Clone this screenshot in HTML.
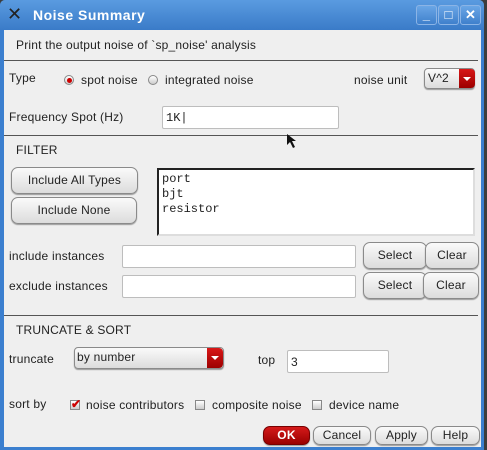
<!DOCTYPE html>
<html><head><style>
*{margin:0;padding:0;box-sizing:border-box}
body{width:487px;height:450px;overflow:hidden;background:#3d3d3d;font-family:"Liberation Sans",sans-serif;font-size:12px;letter-spacing:0.2px;color:#222;position:relative}
.a{position:absolute;white-space:nowrap}
#win{position:absolute;left:0;top:0;width:484px;height:450px;background:#3b7fcf;border-radius:5px 5px 0 0}
#title{position:absolute;left:0;top:0;width:484px;height:30px;background:linear-gradient(#5a9be0,#3a7bc8);border-radius:5px 5px 0 0}
#content{position:absolute;left:4px;top:30px;width:477px;height:417px;background:#efefef}
.sep{position:absolute;left:4px;width:474px;height:1px;background:#555}
.btn{position:absolute;background:linear-gradient(#fafafa,#dcdcdc);border:1px solid #8a8a8a;border-radius:7px;text-align:center;box-shadow:0 1px 1px #999;font-size:12px}
.inp{position:absolute;background:#fff;border:1px solid #bdbdbd;border-radius:2px}
.tb{position:absolute;top:5px;width:21px;height:20px;border:1px solid #8bb4e6;border-radius:3px;background:linear-gradient(#6aa6e6,#3f80cc);color:#fff;text-align:center;font-weight:bold;font-size:13px;line-height:18px}
.radio{position:absolute;width:10px;height:10px;border-radius:50%;border:1px solid #888;background:linear-gradient(#fff,#ccc)}
.cb{position:absolute;width:10px;height:10px;border:1px solid #888;background:linear-gradient(#fff,#ccc)}
.dd{position:absolute;width:16px;background:linear-gradient(#d81818,#9c0000);border-radius:0 4px 4px 0}
.dd:after{content:"";position:absolute;left:4px;top:8px;border-left:4px solid transparent;border-right:4px solid transparent;border-top:4px solid #fff}
</style></head><body>
<div id="win"></div>
<div id="title">
<div class="a" style="left:7px;top:4px;font-size:18px;color:#222">✕</div>
<div class="a" style="left:33px;top:7px;font-size:14px;font-weight:bold;color:#fff;letter-spacing:0.5px">Noise Summary</div>
<div class="tb" style="left:416px">_</div>
<div class="tb" style="left:438px">□</div>
<div class="tb" style="left:460px">✕</div>
</div>
<div id="content"></div>
<div class="a" style="left:16px;top:38px">Print the output noise of `sp_noise' analysis</div>
<div class="sep" style="top:60px"></div>
<div class="a" style="left:9px;top:71px">Type</div>
<div class="radio" style="left:64px;top:75px"><div style="position:absolute;left:2px;top:2px;width:5px;height:5px;border-radius:50%;background:#c00"></div></div>
<div class="a" style="left:81px;top:73px">spot noise</div>
<div class="radio" style="left:148px;top:75px"></div>
<div class="a" style="left:165px;top:73px">integrated noise</div>
<div class="a" style="left:354px;top:73px">noise unit</div>
<div class="btn" style="left:424px;top:68px;width:51px;height:21px;text-align:left;padding-left:3px;line-height:18px;border-radius:4px">V^2</div>
<div class="dd" style="left:459px;top:69px;height:19px"></div>
<div class="a" style="left:9px;top:110px">Frequency Spot (Hz)</div>
<div class="inp" style="left:162px;top:106px;width:177px;height:23px"><span class="a" style="left:3px;top:4px;font-family:'Liberation Mono',monospace;font-size:12px;letter-spacing:0">1K|</span></div>
<div class="sep" style="top:135px"></div>
<div class="a" style="left:16px;top:143px">FILTER</div>
<div class="btn" style="left:11px;top:167px;width:127px;height:27px;line-height:25px">Include All Types</div>
<div class="btn" style="left:11px;top:197px;width:126px;height:27px;line-height:25px">Include None</div>
<div style="position:absolute;left:157px;top:168px;width:318px;height:68px;background:#fff;border:2px solid #222;border-right-color:#ddd;border-bottom-color:#ddd;font-family:'Liberation Mono',monospace;font-size:12px;letter-spacing:0;line-height:15px;padding:2px 3px">port<br>bjt<br>resistor</div>
<div class="a" style="left:9px;top:249px">include instances</div>
<div class="inp" style="left:122px;top:245px;width:234px;height:23px"></div>
<div class="btn" style="left:363px;top:242px;width:64px;height:27px;line-height:25px">Select</div>
<div class="btn" style="left:425px;top:242px;width:54px;height:27px;line-height:25px">Clear</div>
<div class="a" style="left:9px;top:279px">exclude instances</div>
<div class="inp" style="left:122px;top:275px;width:234px;height:23px"></div>
<div class="btn" style="left:363px;top:272px;width:64px;height:27px;line-height:25px">Select</div>
<div class="btn" style="left:423px;top:272px;width:56px;height:27px;line-height:25px">Clear</div>
<div class="sep" style="top:315px"></div>
<div class="a" style="left:16px;top:323px">TRUNCATE &amp; SORT</div>
<div class="a" style="left:9px;top:352px">truncate</div>
<div class="btn" style="left:74px;top:347px;width:150px;height:22px;text-align:left;padding-left:2px;line-height:19px;border-radius:4px">by number</div>
<div class="dd" style="left:207px;top:348px;height:20px"></div>
<div class="a" style="left:258px;top:353px">top</div>
<div class="inp" style="left:287px;top:350px;width:102px;height:23px"><span class="a" style="left:3px;top:4px">3</span></div>
<div class="a" style="left:9px;top:397px">sort by</div>
<div class="cb" style="left:70px;top:400px"><span class="a" style="left:0px;top:-4px;color:#c00;font-size:12px;font-weight:bold">✔</span></div>
<div class="a" style="left:86px;top:398px">noise contributors</div>
<div class="cb" style="left:195px;top:400px"></div>
<div class="a" style="left:212px;top:398px">composite noise</div>
<div class="cb" style="left:312px;top:400px"></div>
<div class="a" style="left:329px;top:398px">device name</div>
<div class="btn" style="left:263px;top:426px;width:47px;height:19px;line-height:17px;background:linear-gradient(#d51a1a,#9a0000);color:#fff;font-weight:bold;border-color:#700">OK</div>
<div class="btn" style="left:313px;top:426px;width:58px;height:19px;line-height:17px">Cancel</div>
<div class="btn" style="left:375px;top:426px;width:53px;height:19px;line-height:17px">Apply</div>
<div class="btn" style="left:431px;top:426px;width:49px;height:19px;line-height:17px">Help</div>
<svg style="position:absolute;left:286px;top:133px" width="12" height="16"><path d="M1 1 L1 12 L4 9 L7 15 L9 14 L6 8 L10 8 Z" fill="#111"/></svg>
</body></html>
